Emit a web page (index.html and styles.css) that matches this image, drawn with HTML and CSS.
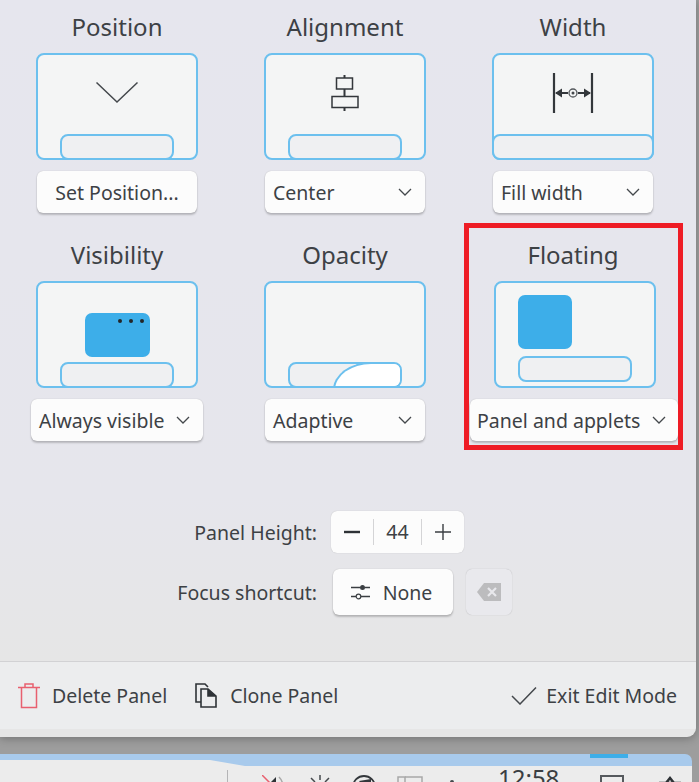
FILE: index.html
```html
<!DOCTYPE html>
<html lang="en">
<head>
    <meta charset="UTF-8">
    <title>Panel Settings</title>
    <link rel="stylesheet" href="styles.css">
</head>
<body>
    <div class="panel-config">
        <div class="config-main">
            <div class="option-grid">
                <div class="option">
                    <div class="option-title">Position</div>
                    <div class="preview">
                        <svg class="preview-icon icon-chevron" width="44" height="24" viewBox="0 0 44 24"><path d="M1.500 1.500 L22 21 L42.500 1.500" fill="none" stroke="#44484c" stroke-width="1.500"/></svg>
                        <div class="preview-bar"></div>
                    </div>
                    <div class="control">Set Position...</div>
                </div>
                <div class="option">
                    <div class="option-title">Alignment</div>
                    <div class="preview">
                        <svg class="preview-icon icon-align" width="28" height="36" viewBox="0 0 28 36"><path d="M13.500 0 V3 M13.500 14 V22 M13.500 33 V36" stroke="#33373b" stroke-width="2" fill="none"/><rect x="5.500" y="3" width="16" height="11" fill="none" stroke="#33373b" stroke-width="1.500"/><rect x="1" y="21.500" width="26" height="11" fill="none" stroke="#33373b" stroke-width="1.500"/></svg>
                        <div class="preview-bar"></div>
                    </div>
                    <div class="control select">
                        <span>Center</span>
                        <svg class="chevron" width="14" height="8" viewBox="0 0 14 8"><path d="M1 1 L7 7 L13 1" fill="none" stroke="#44484c" stroke-width="1.300"/></svg>
                    </div>
                </div>
                <div class="option">
                    <div class="option-title">Width</div>
                    <div class="preview">
                        <svg class="preview-icon icon-width" width="42" height="42" viewBox="0 0 42 42"><path d="M2 1 V41 M40 1 V41" stroke="#33373b" stroke-width="2.200"/><path d="M4 21 H16 M26 21 H38" stroke="#33373b" stroke-width="2"/><path d="M3 21 L10 16.500 V25.500 Z M39 21 L32 16.500 V25.500 Z" fill="#33373b"/><circle cx="21" cy="21" r="4" fill="none" stroke="#55595d" stroke-width="1.300"/><circle cx="21" cy="21" r="1.500" fill="#44484c"/></svg>
                        <div class="preview-bar bar-full"></div>
                    </div>
                    <div class="control select">
                        <span>Fill width</span>
                        <svg class="chevron" width="14" height="8" viewBox="0 0 14 8"><path d="M1 1 L7 7 L13 1" fill="none" stroke="#44484c" stroke-width="1.300"/></svg>
                    </div>
                </div>
                <div class="option">
                    <div class="option-title">Visibility</div>
                    <div class="preview">
                        <div class="window-shape">
                            <i></i><i></i><i></i>
                        </div>
                        <div class="preview-bar"></div>
                    </div>
                    <div class="control select wide-visibility">
                        <span>Always visible</span>
                        <svg class="chevron" width="14" height="8" viewBox="0 0 14 8"><path d="M1 1 L7 7 L13 1" fill="none" stroke="#44484c" stroke-width="1.300"/></svg>
                    </div>
                </div>
                <div class="option">
                    <div class="option-title">Opacity</div>
                    <div class="preview">
                        <div class="preview-bar"><span class="opacity-arc"></span></div>
                    </div>
                    <div class="control select">
                        <span>Adaptive</span>
                        <svg class="chevron" width="14" height="8" viewBox="0 0 14 8"><path d="M1 1 L7 7 L13 1" fill="none" stroke="#44484c" stroke-width="1.300"/></svg>
                    </div>
                </div>
                <div class="option option-floating">
                    <div class="option-title">Floating</div>
                    <div class="preview">
                        <div class="float-square"></div>
                        <div class="preview-bar bar-floating"></div>
                    </div>
                    <div class="control select wide-floating">
                        <span>Panel and applets</span>
                        <svg class="chevron" width="14" height="8" viewBox="0 0 14 8"><path d="M1 1 L7 7 L13 1" fill="none" stroke="#44484c" stroke-width="1.300"/></svg>
                    </div>
                    <div class="red-mark"></div>
                </div>
            </div>

            <div class="form-rows">
                <label class="form-label">Panel Height:</label>
                <div class="spin-box">
                    <svg width="16" height="16" viewBox="0 0 16 16"><path d="M0 8 H16" stroke="#2e3236" stroke-width="2.400"/></svg>
                    <span class="spin-value">44</span>
                    <svg width="16" height="16" viewBox="0 0 16 16"><path d="M0 8 H16 M8 0 V16" stroke="#3a3e42" stroke-width="1.400"/></svg>
                </div>
                <label class="form-label">Focus shortcut:</label>
                <div class="shortcut-row">
                    <div class="control shortcut-button">
                        <svg width="19" height="16" viewBox="0 0 19 16"><path d="M0 3.500 H9 M14 3.500 H19 M0 12.500 H5 M10 12.500 H19" stroke="#3a3e42" stroke-width="1.300"/><circle cx="11.500" cy="3.500" r="2.500" fill="#3a3e42"/><circle cx="7.500" cy="12.500" r="2.300" fill="none" stroke="#3a3e42" stroke-width="1.200"/></svg>
                        <span>None</span>
                    </div>
                    <div class="clear-button">
                        <svg width="24" height="18" viewBox="0 0 24 18"><path d="M7 0 H24 V18 H7 L0 9 Z" fill="#bcbcbe"/><path d="M11 5 L19 13 M19 5 L11 13" stroke="#e8e8ec" stroke-width="2.200"/></svg>
                    </div>
                </div>
            </div>
        </div>

        <div class="config-footer">
            <div class="footer-btn delete-btn">
                <svg width="22" height="26" viewBox="0 0 22 26"><path d="M0 4.500 H22 M7 4 V1 H15 V4 M3.500 5 V24.500 H18.500 V5" fill="none" stroke="#e8606f" stroke-width="1.500"/></svg>
                <span>Delete Panel</span>
            </div>
            <div class="footer-btn clone-btn">
                <svg width="22" height="25" viewBox="0 0 22 25"><path d="M6 19 H1 V1 H10 L13 4" fill="none" stroke="#2e3236" stroke-width="1.600"/><path d="M6 6 H13 L21 13 V24 H6 Z M13 6 V13 H21" fill="none" stroke="#2e3236" stroke-width="1.600"/><path d="M13 6 L21 13 H13 Z" fill="#2e3236"/></svg>
                <span>Clone Panel</span>
            </div>
            <div class="footer-btn exit-btn">
                <svg width="26" height="19" viewBox="0 0 26 19"><path d="M1 10 L9 18 L25 1.500" fill="none" stroke="#44484c" stroke-width="1.500"/></svg>
                <span>Exit Edit Mode</span>
            </div>
        </div>
    </div>

    <div class="taskbar">
        <div class="task-accent"></div>
        <div class="tray">
            <div class="tray-sep"></div>
            <svg class="tray-mute" width="24" height="16" viewBox="0 0 24 16"><path d="M8 8 L14 2 V16 H8 Z" fill="#2e3236"/><path d="M17 2 Q22 7 21 16" fill="none" stroke="#a8a8a8" stroke-width="1.500"/><path d="M0 0 L16 16" stroke="#e8606f" stroke-width="1.500"/></svg>
            <svg class="tray-sun" width="24" height="16" viewBox="0 0 24 16"><path d="M12 0 V5 M3 3 L7 7 M21 3 L17 7" stroke="#44484c" stroke-width="1.500"/><circle cx="12" cy="15" r="6" fill="none" stroke="#44484c" stroke-width="1.500"/></svg>
            <svg class="tray-half" width="26" height="20" viewBox="0 0 26 20"><circle cx="13" cy="12" r="11" fill="none" stroke="#33373b" stroke-width="1.800"/><path d="M8 6 L20 4 V12 H13 Z" fill="#33373b"/></svg>
            <svg class="tray-box" width="26" height="16" viewBox="0 0 26 16"><path d="M8 1 H25 V16" fill="none" stroke="#a8a8a8" stroke-width="1.500"/><rect x="1" y="1" width="7" height="19" fill="none" stroke="#a8a8a8" stroke-width="1.500"/></svg>
            <svg class="tray-dot" width="6" height="6" viewBox="0 0 6 6"><circle cx="3" cy="3" r="2" fill="#44484c"/></svg>
            <div class="clock">12:58</div>
            <div class="tray-square"></div>
            <svg class="tray-last" width="22" height="10" viewBox="0 0 22 10"><path d="M0 8 H22 M7 8 L11 3 L15 8" fill="none" stroke="#2e3236" stroke-width="2.500"/></svg>
        </div>
    </div>
</body>
</html>
```

FILE: styles.css
```css
* {
    box-sizing: border-box;
}

html, body {
    height: 100%;
}

body {
    margin: 0;
    background: #9d9d9d;
    font-family: 'Noto Sans', sans-serif;
    color: #3d4145;
    overflow: hidden;
}

.panel-config {
    width: 696px;
    height: 737px;
    display: flex;
    flex-direction: column;
    border-radius: 0 0 9px 0;
    overflow: hidden;
    box-shadow: 0 2px 8px rgba(0, 0, 0, 0.25);
}

.config-main {
    flex: 1;
    padding-top: 11px;
    background: linear-gradient(180deg, #e6e6ee 0%, #e6e6ec 75%, #e6e6e6 100%);
}

.option-grid {
    display: grid;
    grid-template-columns: repeat(3, 228px);
    row-gap: 26px;
    padding-left: 3px;
}

.option {
    display: flex;
    flex-direction: column;
    align-items: center;
    position: relative;
}

.option-title {
    font-size: 24px;
    line-height: 32px;
    height: 32px;
    margin-bottom: 10px;
    white-space: nowrap;
}

.preview {
    width: 162px;
    height: 107px;
    background: #f4f5f5;
    border: 2px solid #6cc0ee;
    border-radius: 8px;
    display: flex;
    flex-direction: column;
    align-items: center;
}

.preview-icon {
    flex: none;
}

.icon-chevron {
    margin-top: 26px;
}

.icon-align {
    margin-top: 20px;
}

.icon-width {
    margin-top: 17px;
}

.preview-bar {
    width: 114px;
    height: 26px;
    flex: none;
    margin-top: auto;
    margin-bottom: -2px;
    background: #eff0f2;
    border: 2px solid #6cc0ee;
    border-radius: 8px;
    overflow: hidden;
    position: relative;
}

.bar-full {
    width: 162px;
}

/* white part of the bar on the opacity preview */
.opacity-arc {
    position: absolute;
    left: 43px;
    top: -2px;
    width: 80px;
    height: 40px;
    background: #fff;
    border-top: 2px solid #6cc0ee;
    border-left: 2px solid #6cc0ee;
    border-top-left-radius: 38px 28px;
}

.window-shape {
    width: 65px;
    height: 44px;
    flex: none;
    margin-top: 30px;
    padding: 6px 6px 0 0;
    background: #3daee9;
    border-radius: 7px;
    display: flex;
    justify-content: flex-end;
    gap: 7px;
}

.window-shape i {
    width: 4px;
    height: 4px;
    border-radius: 50%;
    background: #232629;
}

.option-floating {
    left: 2px;
}

.option-floating .option-title {
    margin-left: -4px;
}

.float-square {
    width: 54px;
    height: 54px;
    margin-top: 12px;
    margin-left: -60px;
    background: #3daee9;
    border-radius: 7px;
    flex: none;
}

.bar-floating {
    margin-top: 7px;
    margin-bottom: 0;
}

.control {
    margin-top: 11px;
    height: 42px;
    width: 160px;
    display: flex;
    align-items: center;
    justify-content: center;
    background: #fcfcfc;
    border-radius: 6px;
    box-shadow: 0 0 1px rgba(0, 0, 0, 0.25), 0 2px 2px rgba(0, 0, 0, 0.2);
    font-size: 19.500px;
}

.select {
    justify-content: space-between;
    padding: 0 13px 0 8px;
    white-space: nowrap;
}

.wide-visibility {
    width: 172px;
}

.wide-floating {
    width: 208px;
    margin-left: -2px;
    padding: 0 12px 0 7px;
}

.chevron {
    flex: none;
}

.red-mark {
    position: absolute;
    left: 3px;
    top: -16px;
    width: 219px;
    height: 227px;
    border: 5px solid #ee1c25;
}

.form-rows {
    display: grid;
    grid-template-columns: 317px auto;
    justify-content: start;
    align-items: center;
    column-gap: 14px;
    row-gap: 16px;
    margin-top: 70px;
}

.form-label {
    text-align: right;
    font-size: 19.500px;
}

.spin-box {
    width: 133px;
    height: 42px;
    display: flex;
    align-items: center;
    padding: 0 13px;
    background: #fcfcfc;
    border-radius: 6px;
    box-shadow: 0 0 1px rgba(0, 0, 0, 0.25);
    font-size: 19.500px;
}

.spin-value {
    flex: 1;
    height: 26px;
    margin: 0 13px;
    text-align: center;
    line-height: 26px;
    border-left: 1px solid #d4d4d6;
    border-right: 1px solid #d4d4d6;
}

.shortcut-row {
    display: flex;
    align-items: center;
    gap: 13px;
    margin-left: 2px;
}

.shortcut-button {
    margin-top: 0;
    width: 120px;
    height: 46px;
    gap: 13px;
    padding-right: 3px;
}

.clear-button {
    width: 46px;
    height: 46px;
    display: flex;
    align-items: center;
    justify-content: center;
    background: #e9e9ed;
    border-radius: 6px;
    box-shadow: 0 0 1px rgba(0, 0, 0, 0.25);
}

.config-footer {
    height: 76px;
    flex: none;
    display: flex;
    align-items: center;
    padding: 0 19px 8px 18px;
    background: linear-gradient(180deg, #ecedee 0%, #ecedee 90%, #e6e6e6 90%);
    border-top: 1px solid #d2d2d4;
    font-size: 19.500px;
}

.footer-btn {
    display: flex;
    align-items: center;
}

.delete-btn {
    gap: 12px;
}

.clone-btn {
    gap: 13px;
    margin-left: 28px;
}

.exit-btn {
    gap: 9px;
    margin-left: auto;
}

.taskbar {
    position: relative;
    width: 692px;
    height: 28px;
    margin-top: 17px;
    background: #a8caec;
    border-radius: 0 7px 0 0;
    overflow: hidden;
}

.task-accent {
    position: absolute;
    left: 590px;
    top: 0;
    width: 38px;
    height: 4px;
    background: #3daee9;
}

.tray {
    height: 100%;
    display: flex;
    align-items: flex-start;
    background: #ececec;
    clip-path: polygon(0 6px, 210px 6px, 245px 12px, 100% 12px, 100% 100%, 0 100%);
    color: #3a3e42;
}

.tray > * {
    flex: none;
}

.tray-sep {
    width: 1px;
    height: 14px;
    margin: 16px 0 0 227px;
    background: #b4b4b6;
}

.tray-mute {
    margin: 21px 0 0 34px;
}

.tray-sun {
    margin: 21px 0 0 22px;
}

.tray-half {
    margin: 21px 0 0 19px;
}

.tray-box {
    margin: 22px 0 0 20px;
}

.tray-dot {
    margin: 25px 0 0 26px;
}

.clock {
    margin: 11px 0 0 43px;
    font-size: 24px;
    line-height: 25px;
}

.tray-square {
    width: 24px;
    height: 12px;
    margin: 21px 0 0 41px;
    border: 2px solid #55595d;
}

.tray-last {
    margin: 21px 0 0 35px;
}
```
